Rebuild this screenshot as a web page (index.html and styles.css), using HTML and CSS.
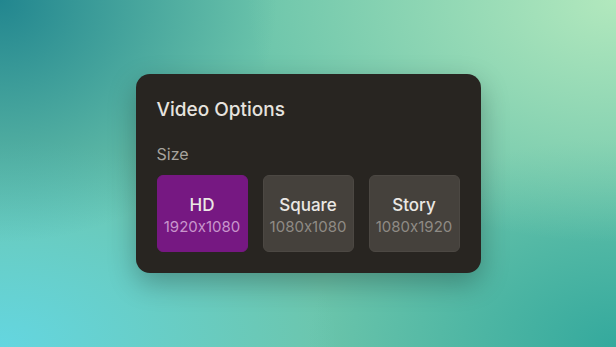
FILE: index.html
```html
<!DOCTYPE html>
<html lang="en">

<head>
    <meta charset="UTF-8">
    <meta name="viewport" content="width=device-width, initial-scale=1.0">
    <title>Video Options</title>
    <link rel="stylesheet" href="styles.css">
</head>

<body>
    <div class="options-card">
        <h2 class="options-title">Video Options</h2>
        <div class="options-label">Size</div>
        <div class="size-list">
            <button class="size-option selected">
                <span class="size-name">HD</span>
                <span class="size-dims">1920x1080</span>
            </button>
            <button class="size-option">
                <span class="size-name">Square</span>
                <span class="size-dims">1080x1080</span>
            </button>
            <button class="size-option">
                <span class="size-name">Story</span>
                <span class="size-dims">1080x1920</span>
            </button>
        </div>
    </div>
</body>
</html>
```

FILE: styles.css
```css
/* Page background */
html,
body {
margin: 0;
height: 100%;
}

body {
display: flex;
align-items: center;
justify-content: center;
font-family: Inter, "Noto Sans", sans-serif;
font-feature-settings: "calt" 0;
background:
    radial-gradient(ellipse 60% 70% at 100% 0%, #b2e8bd 0%, rgba(178, 232, 189, 0) 100%),
    radial-gradient(ellipse 45% 70% at 0% 0%, #22868f 0%, rgba(34, 134, 143, 0) 100%),
    radial-gradient(ellipse 55% 60% at 0% 100%, #64d6e0 0%, rgba(100, 214, 224, 0) 100%),
    radial-gradient(ellipse 50% 60% at 100% 100%, #34a99d 0%, rgba(52, 169, 157, 0) 100%),
    #6cc5ab;
}

/* The dark panel */
.options-card {
width: 345px;
box-sizing: border-box;
padding: 24px 21px 21px;
background: #282521;
border-radius: 14px;
box-shadow: 0 10px 28px rgba(0, 0, 0, 0.28);
}

.options-title {
margin: 0;
font-size: 19px;
line-height: 24px;
font-weight: 500;
color: #e6e3df;
}

.options-label {
margin-top: 22px;
font-size: 16px;
line-height: 20px;
color: #a7a39d;
}

/* Size buttons */
.size-list {
display: grid;
grid-template-columns: repeat(3, 1fr);
gap: 15px;
margin-top: 11px;
}

.size-option {
display: flex;
flex-direction: column;
align-items: center;
justify-content: center;
gap: 2px;
height: 77px;
padding: 4px 0 0;
font-family: inherit;
font-feature-settings: "calt" 0;
background: #45413c;
border: 1px solid #4c4843;
border-radius: 6px;
}

.size-name {
font-size: 17px;
line-height: 20px;
font-weight: 500;
color: #ebe8e4;
}

.size-dims {
font-size: 15px;
line-height: 20px;
color: #8f8b85;
}

.size-option.selected {
background: #761882;
border-color: #761882;
}

.size-option.selected .size-dims {
color: #c895cc;
}
```
